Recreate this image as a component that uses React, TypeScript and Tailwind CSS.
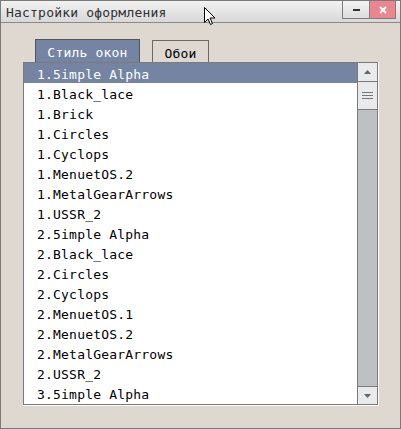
import React from "react";

const items = [
  "1.5imple Alpha",
  "1.Black_lace",
  "1.Brick",
  "1.Circles",
  "1.Cyclops",
  "1.MenuetOS.2",
  "1.MetalGearArrows",
  "1.USSR_2",
  "2.5imple Alpha",
  "2.Black_lace",
  "2.Circles",
  "2.Cyclops",
  "2.MenuetOS.1",
  "2.MenuetOS.2",
  "2.MetalGearArrows",
  "2.USSR_2",
  "3.5imple Alpha",
];

const font = { fontFamily: '"DejaVu Sans Mono", "Liberation Mono", monospace' };

export default function App() {
  return (
    <div
      className="relative w-[401px] h-[429px] border border-[#7a7a7a] bg-[#ded8d1] flex flex-col text-[13px] tracking-[0.2px] leading-none"
      style={font}
    >
      {/* title bar */}
      <div className="h-[22px] shrink-0 flex items-start border-b border-[#8a8a8a] bg-gradient-to-b from-[#f2f2f2] to-[#d8d8d8]">
        <div className="pl-[5px] pt-[5px] text-[#303030] flex-1">Настройки оформления</div>
        <div className="flex mr-[4px]">
          <div className="w-[27px] h-[18px] border-l border-b border-[#7c7c7c] bg-gradient-to-b from-[#f4f4f4] to-[#dcdcdc] flex items-center justify-center">
            <div className="w-[7px] h-[2px] bg-[#333]" />
          </div>
          <div className="w-[27px] h-[18px] border-l border-b border-r border-[#8a7a7a] bg-[#ea8690] flex items-center justify-center">
            <svg width="8" height="8" viewBox="0 0 8 8">
              <path d="M1 1 L7 7 M7 1 L1 7" stroke="#fff" strokeWidth="2" />
            </svg>
          </div>
        </div>
      </div>

      {/* body */}
      <div className="pl-[22px] pt-[16px]">
        <div className="flex items-end h-[23px]">
          <div className="ml-[12px] w-[105px] h-[23px] border border-b-0 border-[#555] bg-[#7584a3] text-white flex items-center justify-center pt-[3px]">
            Стиль окон
          </div>
          <div className="ml-[12px] w-[57px] h-[22px] border border-b-0 border-[#6a6a6a] text-black flex items-center justify-center pt-[3px]">
            Обои
          </div>
        </div>
        <div className="w-[356px] h-[344px] border-r border-b border-white">
          <div className="w-[355px] h-[343px] border border-[#7a7a7a] bg-white flex">
            <div className="flex-1 flex flex-col">
              {items.map((t, i) => (
                <div
                  key={t}
                  className={
                    "h-[20px] shrink-0 flex items-center pl-[13px] pt-[2px] " +
                    (i === 0 ? "bg-[#7584a3] text-white" : "text-black")
                  }
                >
                  {t}
                </div>
              ))}
            </div>
            <div className="w-[20px] border-l border-[#7a7a7a] bg-[#bdc1c3] flex flex-col">
              <div className="h-[19px] border-b border-[#7a7a7a] bg-[#e8eaec] flex items-center justify-center">
                <svg width="7" height="4" viewBox="0 0 7 4">
                  <path d="M3.5 0 L7 4 L0 4 Z" fill="#666" />
                </svg>
              </div>
              <div className="h-[28px] border-b border-[#7a7a7a] bg-[#e8eaec] flex flex-col items-center justify-center gap-[2px]">
                <div className="w-[11px] h-[1px] bg-[#777]" />
                <div className="w-[11px] h-[1px] bg-[#777]" />
                <div className="w-[11px] h-[1px] bg-[#777]" />
              </div>
              <div className="flex-1" />
              <div className="h-[18px] border-t border-[#7a7a7a] bg-[#e8eaec] flex items-center justify-center">
                <svg width="7" height="4" viewBox="0 0 7 4">
                  <path d="M0 0 L7 0 L3.5 4 Z" fill="#666" />
                </svg>
              </div>
            </div>
          </div>
        </div>
      </div>

      {/* mouse cursor */}
      <svg className="absolute left-[203px] top-[6px]" width="12" height="19" viewBox="0 0 12 19">
        <path d="M0.5 0.5 L0.5 15.5 L4 12 L6.5 17.5 L8.5 16.5 L6 11 L11 11 Z" fill="#fff" stroke="#000" strokeWidth="1" />
      </svg>
    </div>
  );
}
